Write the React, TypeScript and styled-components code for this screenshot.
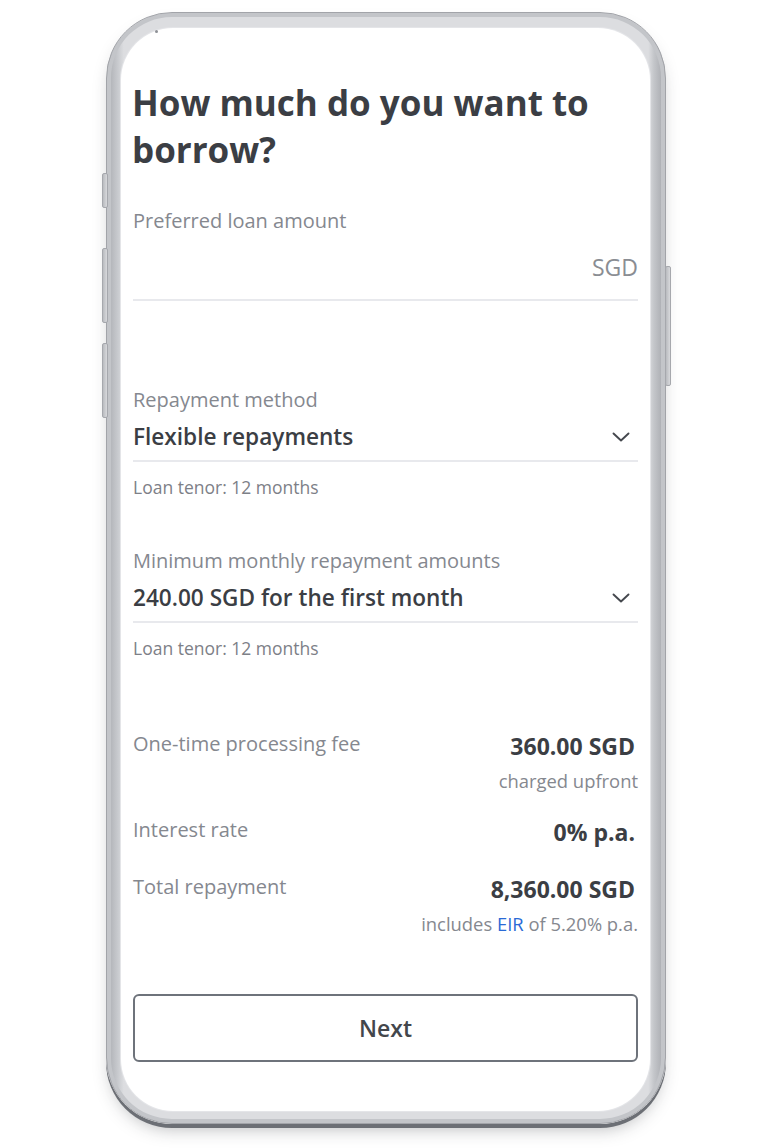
import React from 'react';
import styled, { createGlobalStyle } from 'styled-components';

const GlobalStyle = createGlobalStyle`
  html, body {
    margin: 0;
    padding: 0;
    background: #ffffff;
  }
  body {
    font-family: 'Open Sans', 'Noto Sans', sans-serif;
    -webkit-font-smoothing: antialiased;
  }
`;

const Stage = styled.div`
  width: 764px;
  height: 1148px;
  padding: 12px 0 0 106px;
  box-sizing: border-box;
`;

const Phone = styled.div`
  position: relative;
  width: 560px;
  height: 1112px;
  box-sizing: border-box;
  padding: 15px 15px 12px 14px;
  border-radius: 66px;
  background: linear-gradient(90deg, #a9abb0 0%, #c9cbcf 2%, #dcdde0 3%, #dcdde0 97%, #c4c6ca 98%, #a4a6ab 100%);
  border: 1px solid #a2a4a9;
  box-shadow:
    0 4px 0 #6c6f75,
    0 10px 18px -6px rgba(40, 42, 48, 0.35),
    inset 0 0 0 4px #c3c5c9;
`;

const SideButton = styled.span<{ $side: 'left' | 'right'; $top: number; $h: number }>`
  position: absolute;
  top: ${(p) => p.$top}px;
  ${(p) => (p.$side === 'left' ? 'left: -5px;' : 'right: -6px;')}
  width: 4px;
  height: ${(p) => p.$h}px;
  border-radius: 2px;
  background: linear-gradient(90deg, #b9bbbf, #d8d9dc);
  border: 1px solid #a6a8ad;
`;

const Screen = styled.div`
  position: relative;
  height: 100%;
  box-sizing: border-box;
  background: #ffffff;
  border-radius: 52px;
  padding: 51px 12px 0 12px;
  display: flex;
  flex-direction: column;
  box-shadow: 0 0 0 1px #e4e5e8;
`;

const Camera = styled.span`
  position: absolute;
  top: 2px;
  left: 34px;
  width: 3px;
  height: 3px;
  border-radius: 50%;
  background: #8e9196;
`;

const Title = styled.h1`
  margin: 0 0 0 -1px;
  font-size: 35px;
  line-height: 47px;
  font-weight: 700;
  color: #3b3e44;
`;

const Field = styled.div<{ $mt: number }>`
  margin-top: ${(p) => p.$mt}px;
  display: flex;
  flex-direction: column;
`;

const Label = styled.div`
  font-size: 20px;
  line-height: 26px;
  color: #85888f;
`;

const InputLine = styled.div<{ $h: number }>`
  height: ${(p) => p.$h}px;
  display: flex;
  align-items: center;
  justify-content: space-between;
  border-bottom: 2px solid #e8e9ed;
`;

const Suffix = styled.span`
  margin-left: auto;
  font-size: 23px;
  line-height: 30px;
  color: #8a8d93;
`;

const Value = styled.span`
  font-size: 22.6px;
  line-height: 30px;
  font-weight: 600;
  color: #3b3e44;
`;

const Chevron = styled.svg`
  width: 18px;
  height: 10px;
  margin-right: 8px;
`;

const Hint = styled.div`
  margin-top: 14px;
  font-size: 17.5px;
  line-height: 22px;
  color: #7d8087;
`;

const Summary = styled.div`
  margin-top: 72px;
  display: flex;
  flex-direction: column;
`;

const Row = styled.div<{ $mt: number }>`
  margin-top: ${(p) => p.$mt}px;
  display: grid;
  grid-template-columns: 1fr auto;
  align-items: start;
`;

const RowLabel = styled.span`
  font-size: 20px;
  line-height: 26px;
  color: #85888f;
`;

const RowValue = styled.div`
  display: flex;
  flex-direction: column;
  align-items: flex-end;
  padding-right: 3px;
`;

const Amount = styled.span`
  font-size: 23px;
  line-height: 30px;
  font-weight: 700;
  color: #3b3e44;
`;

const Note = styled.span`
  margin-top: 8px;
  margin-right: -3px;
  font-size: 18.4px;
  line-height: 24px;
  color: #85888f;
`;

const Link = styled.span`
  color: #2a6ad6;
`;

const NextButton = styled.button`
  margin-top: 58px;
  height: 68px;
  width: 100%;
  box-sizing: border-box;
  border: 2px solid #6e737b;
  border-radius: 6px;
  background: #ffffff;
  font-family: 'Open Sans', 'Noto Sans', sans-serif;
  font-size: 23px;
  font-weight: 600;
  color: #43464c;
`;

const ChevronDown = () => (
  <Chevron viewBox="0 0 18 10">
    <polyline
      points="1.5,1.5 9,8.5 16.5,1.5"
      fill="none"
      stroke="#45484e"
      strokeWidth="1.9"
      strokeLinecap="round"
      strokeLinejoin="round"
    />
  </Chevron>
);

export default function App() {
  return (
    <>
      <GlobalStyle />
      <Stage>
        <Phone>
          <SideButton $side="left" $top={160} $h={33} />
          <SideButton $side="left" $top={235} $h={73} />
          <SideButton $side="left" $top={330} $h={73} />
          <SideButton $side="right" $top={253} $h={118} />
          <Screen>
            <Camera />
            <Title>
              How much do you want to
              <br />
              borrow?
            </Title>

            <Field $mt={35}>
              <Label>Preferred loan amount</Label>
              <InputLine $h={65}>
                <Suffix>SGD</Suffix>
              </InputLine>
            </Field>

            <Field $mt={86}>
              <Label>Repayment method</Label>
              <InputLine $h={47}>
                <Value>Flexible repayments</Value>
                <ChevronDown />
              </InputLine>
              <Hint>Loan tenor: 12 months</Hint>
            </Field>

            <Field $mt={50}>
              <Label>Minimum monthly repayment amounts</Label>
              <InputLine $h={47}>
                <Value>240.00 SGD for the first month</Value>
                <ChevronDown />
              </InputLine>
              <Hint>Loan tenor: 12 months</Hint>
            </Field>

            <Summary>
              <Row $mt={0}>
                <RowLabel>One-time processing fee</RowLabel>
                <RowValue>
                  <Amount>360.00 SGD</Amount>
                  <Note>charged upfront</Note>
                </RowValue>
              </Row>
              <Row $mt={24}>
                <RowLabel>Interest rate</RowLabel>
                <RowValue>
                  <Amount>0% p.a.</Amount>
                </RowValue>
              </Row>
              <Row $mt={27}>
                <RowLabel>Total repayment</RowLabel>
                <RowValue>
                  <Amount>8,360.00 SGD</Amount>
                  <Note>
                    includes <Link>EIR</Link> of 5.20% p.a.
                  </Note>
                </RowValue>
              </Row>
            </Summary>

            <NextButton>Next</NextButton>
          </Screen>
        </Phone>
      </Stage>
    </>
  );
}
